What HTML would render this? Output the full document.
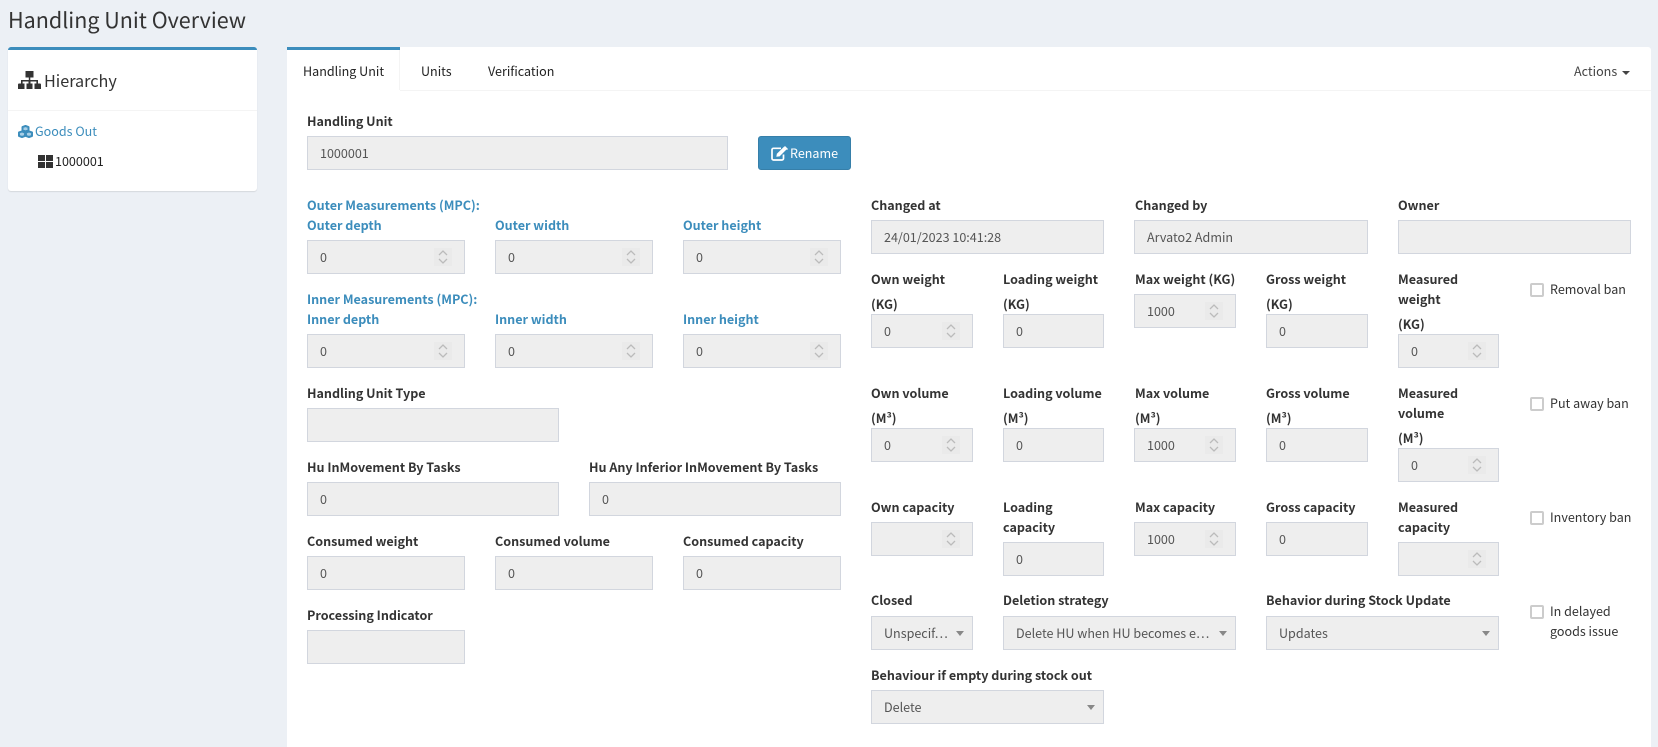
<!DOCTYPE html>
<html lang="en"><head><meta charset="utf-8"><title>Handling Unit Overview</title>
<style>
*{box-sizing:border-box}
html,body{margin:0;padding:0;width:1658px;height:747px;overflow:hidden;background:#ecf0f5}
body{position:relative;font-family:"Noto Sans CJK JP","Liberation Sans",sans-serif;font-size:12.55px;color:#333}
.a,.l,.i,.s,.b,.c{position:absolute}
.a{white-space:nowrap;line-height:20px}
.l{font-weight:700;line-height:20px;white-space:nowrap;color:#333}
.bl{color:#3c8dbc}
.i,.s{height:34px;background:#eee;border:1px solid #d2d6de;color:#555;line-height:32px;padding-left:12px;white-space:nowrap}
.s::after{content:"";position:absolute;right:8px;top:14px;border:4px solid transparent;border-top:5px solid #888;border-bottom:0}
.n::before{content:"";position:absolute;right:12px;top:7px;width:18px;height:18px;background:#eaeaea}
.n svg{position:absolute;right:16px;top:8px}
.c{width:14px;height:14px;border:2px solid #ccc;border-radius:2px;background:#fff}
.box{position:absolute;background:#fff;border-top:3px solid #3c8dbc;border-radius:3px}
</style></head><body>
<div class="a" style="left:8px;top:4px;font-size:21.5px;line-height:32px">Handling Unit Overview</div>

<div class="box" style="left:8px;top:47px;width:249px;height:144px;box-shadow:0 1px 1px rgba(0,0,0,.1)"></div>
<svg class="a" style="left:18px;top:71px" width="23" height="19" viewBox="0 0 23 19" fill="#333"><path d="M7.500 0h8v6.500h-8zM10.800 6h1.500v3H20v3.500h-1.600v-2h-5.900v2h-2v-2H4.600v2H3V9h7.800z"/><path d="M1 12.500h5.500V18H0v-4.500a1 1 0 0 1 1-1zM8.500 12.500h6V18h-6zM16.500 12.500H22a1 1 0 0 1 1 1V18h-6.500z"/></svg>
<div class="a" style="left:44px;top:67px;font-size:16.2px;line-height:26px">Hierarchy</div>
<div class="a" style="left:8px;top:110px;width:249px;height:1px;background:#f4f4f4"></div>
<svg class="a" style="left:18px;top:125px" width="15" height="13" viewBox="0 0 15 13" fill="#a9cfe6" stroke="#3c8dbc" stroke-width="2" stroke-linejoin="round"><path d="M7.500 1l3 1.100v3.200l-3 1.100-3-1.100V2.100zM4 6.400l3 1.100v3.400L4 12 1 10.900V7.500zM11 6.400l3 1.100v3.400L11 12l-3-1.100V7.500z"/></svg>
<div class="a" style="left:35px;top:121px;color:#3c8dbc">Goods Out</div>
<svg class="a" style="left:38px;top:155px" width="15" height="13" viewBox="0 0 15 13" fill="#333"><path d="M0 0h7v6H0zM8 0h7v6H8zM0 7h7v6H0zM8 7h7v6H8z"/></svg>
<div class="a" style="left:55px;top:151px;color:#222">1000001</div>

<div class="box" style="left:287px;top:47px;width:1364px;height:700px;border-top:0;border-radius:3px 3px 0 0"></div>
<div class="a" style="left:287px;top:47px;width:113px;height:3px;background:#3c8dbc"></div>
<div class="a" style="left:287px;top:90px;width:1364px;height:1px;background:#f4f4f4"></div>
<div class="a" style="left:399px;top:50px;width:1px;height:41px;background:#f4f4f4"></div>
<div class="a" style="left:287px;top:90px;width:113px;height:1px;background:#fff"></div>
<div class="a" style="left:303px;top:61px;color:#222">Handling Unit</div>
<div class="a" style="left:421px;top:61px;color:#222">Units</div>
<div class="a" style="left:488px;top:61px;color:#222">Verification</div>
<div class="a" style="left:1574px;top:61px;color:#444">Actions</div>
<div class="a" style="left:1622px;top:71px;width:0;height:0;border:4px solid transparent;border-top:4px solid #444;border-bottom:0"></div>

<div class="l" style="left:307px;top:111px">Handling Unit</div>
<div class="i" style="left:307px;top:136px;width:421px">1000001</div>
<div class="a" style="left:758px;top:136px;width:93px;height:34px;background:#3c8dbc;border:1px solid #367fa9;border-radius:3px;color:#fff;line-height:32px;padding-left:31px">Rename</div>
<svg class="a" style="left:771px;top:146px" width="17" height="15" viewBox="0 0 17 15" fill="none" stroke="#fff"><path d="M10 2.300H2.500A1.500 1.500 0 0 0 1 3.800v8.700A1.500 1.500 0 0 0 2.500 14h8.500a1.500 1.500 0 0 0 1.500-1.500V8.500" stroke-width="1.700"/><path d="M5.300 10.800l.6-3.100L13 .8l2.600 2.600-7 7z" fill="#fff" stroke="none"/><path d="M14 0l3 3-1 1-3-3z" fill="#fff" stroke="none"/></svg>

<div class="l bl" style="left:307px;top:195px">Outer Measurements (MPC):</div>
<div class="l bl" style="left:307px;top:215px">Outer depth</div>
<div class="l bl" style="left:495px;top:215px">Outer width</div>
<div class="l bl" style="left:683px;top:215px">Outer height</div>
<div class="i n" style="left:307px;top:240px;width:158px">0<svg width="10" height="16" viewBox="0 0 10 16" fill="none" stroke="#bbb" stroke-width="1.300"><path d="M1 6l4-4 4 4M1 10l4 4 4-4"/></svg></div>
<div class="i n" style="left:495px;top:240px;width:158px">0<svg width="10" height="16" viewBox="0 0 10 16" fill="none" stroke="#bbb" stroke-width="1.300"><path d="M1 6l4-4 4 4M1 10l4 4 4-4"/></svg></div>
<div class="i n" style="left:683px;top:240px;width:158px">0<svg width="10" height="16" viewBox="0 0 10 16" fill="none" stroke="#bbb" stroke-width="1.300"><path d="M1 6l4-4 4 4M1 10l4 4 4-4"/></svg></div>

<div class="l bl" style="left:307px;top:289px">Inner Measurements (MPC):</div>
<div class="l bl" style="left:307px;top:309px">Inner depth</div>
<div class="l bl" style="left:495px;top:309px">Inner width</div>
<div class="l bl" style="left:683px;top:309px">Inner height</div>
<div class="i n" style="left:307px;top:334px;width:158px">0<svg width="10" height="16" viewBox="0 0 10 16" fill="none" stroke="#bbb" stroke-width="1.300"><path d="M1 6l4-4 4 4M1 10l4 4 4-4"/></svg></div>
<div class="i n" style="left:495px;top:334px;width:158px">0<svg width="10" height="16" viewBox="0 0 10 16" fill="none" stroke="#bbb" stroke-width="1.300"><path d="M1 6l4-4 4 4M1 10l4 4 4-4"/></svg></div>
<div class="i n" style="left:683px;top:334px;width:158px">0<svg width="10" height="16" viewBox="0 0 10 16" fill="none" stroke="#bbb" stroke-width="1.300"><path d="M1 6l4-4 4 4M1 10l4 4 4-4"/></svg></div>

<div class="l" style="left:307px;top:383px">Handling Unit Type</div>
<div class="i" style="left:307px;top:408px;width:252px"></div>
<div class="l" style="left:307px;top:457px">Hu InMovement By Tasks</div>
<div class="l" style="left:589px;top:457px">Hu Any Inferior InMovement By Tasks</div>
<div class="i" style="left:307px;top:482px;width:252px">0</div>
<div class="i" style="left:589px;top:482px;width:252px">0</div>
<div class="l" style="left:307px;top:531px">Consumed weight</div>
<div class="l" style="left:495px;top:531px">Consumed volume</div>
<div class="l" style="left:683px;top:531px">Consumed capacity</div>
<div class="i" style="left:307px;top:556px;width:158px">0</div>
<div class="i" style="left:495px;top:556px;width:158px">0</div>
<div class="i" style="left:683px;top:556px;width:158px">0</div>
<div class="l" style="left:307px;top:605px">Processing Indicator</div>
<div class="i" style="left:307px;top:630px;width:158px"></div>

<div class="l" style="left:871px;top:195px">Changed at</div>
<div class="l" style="left:1135px;top:195px">Changed by</div>
<div class="l" style="left:1398px;top:195px">Owner</div>
<div class="i" style="left:871px;top:220px;width:233px">24/01/2023 10:41:28</div>
<div class="i" style="left:1134px;top:220px;width:234px">Arvato2 Admin</div>
<div class="i" style="left:1398px;top:220px;width:233px"></div>

<div class="l" style="left:871px;top:269px">Own weight</div>
<div class="l" style="left:871px;top:294px">(KG)</div>
<div class="l" style="left:1003px;top:269px">Loading weight</div>
<div class="l" style="left:1003px;top:294px">(KG)</div>
<div class="l" style="left:1135px;top:269px">Max weight (KG)</div>
<div class="l" style="left:1266px;top:269px">Gross weight</div>
<div class="l" style="left:1266px;top:294px">(KG)</div>
<div class="l" style="left:1398px;top:269px">Measured</div>
<div class="l" style="left:1398px;top:289px">weight</div>
<div class="l" style="left:1398px;top:314px">(KG)</div>
<div class="i n" style="left:871px;top:314px;width:102px">0<svg width="10" height="16" viewBox="0 0 10 16" fill="none" stroke="#bbb" stroke-width="1.300"><path d="M1 6l4-4 4 4M1 10l4 4 4-4"/></svg></div>
<div class="i" style="left:1003px;top:314px;width:101px">0</div>
<div class="i n" style="left:1134px;top:294px;width:102px">1000<svg width="10" height="16" viewBox="0 0 10 16" fill="none" stroke="#bbb" stroke-width="1.300"><path d="M1 6l4-4 4 4M1 10l4 4 4-4"/></svg></div>
<div class="i" style="left:1266px;top:314px;width:102px">0</div>
<div class="i n" style="left:1398px;top:334px;width:101px">0<svg width="10" height="16" viewBox="0 0 10 16" fill="none" stroke="#bbb" stroke-width="1.300"><path d="M1 6l4-4 4 4M1 10l4 4 4-4"/></svg></div>
<div class="c" style="left:1530px;top:283px"></div>
<div class="a" style="left:1550px;top:279px">Removal ban</div>

<div class="l" style="left:871px;top:383px">Own volume</div>
<div class="l" style="left:871px;top:408px">(M³)</div>
<div class="l" style="left:1003px;top:383px">Loading volume</div>
<div class="l" style="left:1003px;top:408px">(M³)</div>
<div class="l" style="left:1135px;top:383px">Max volume</div>
<div class="l" style="left:1135px;top:408px">(M³)</div>
<div class="l" style="left:1266px;top:383px">Gross volume</div>
<div class="l" style="left:1266px;top:408px">(M³)</div>
<div class="l" style="left:1398px;top:383px">Measured</div>
<div class="l" style="left:1398px;top:403px">volume</div>
<div class="l" style="left:1398px;top:428px">(M³)</div>
<div class="i n" style="left:871px;top:428px;width:102px">0<svg width="10" height="16" viewBox="0 0 10 16" fill="none" stroke="#bbb" stroke-width="1.300"><path d="M1 6l4-4 4 4M1 10l4 4 4-4"/></svg></div>
<div class="i" style="left:1003px;top:428px;width:101px">0</div>
<div class="i n" style="left:1134px;top:428px;width:102px">1000<svg width="10" height="16" viewBox="0 0 10 16" fill="none" stroke="#bbb" stroke-width="1.300"><path d="M1 6l4-4 4 4M1 10l4 4 4-4"/></svg></div>
<div class="i" style="left:1266px;top:428px;width:102px">0</div>
<div class="i n" style="left:1398px;top:448px;width:101px">0<svg width="10" height="16" viewBox="0 0 10 16" fill="none" stroke="#bbb" stroke-width="1.300"><path d="M1 6l4-4 4 4M1 10l4 4 4-4"/></svg></div>
<div class="c" style="left:1530px;top:397px"></div>
<div class="a" style="left:1550px;top:393px">Put away ban</div>

<div class="l" style="left:871px;top:497px">Own capacity</div>
<div class="l" style="left:1003px;top:497px">Loading</div>
<div class="l" style="left:1003px;top:517px">capacity</div>
<div class="l" style="left:1135px;top:497px">Max capacity</div>
<div class="l" style="left:1266px;top:497px">Gross capacity</div>
<div class="l" style="left:1398px;top:497px">Measured</div>
<div class="l" style="left:1398px;top:517px">capacity</div>
<div class="i n" style="left:871px;top:522px;width:102px"><svg width="10" height="16" viewBox="0 0 10 16" fill="none" stroke="#bbb" stroke-width="1.300"><path d="M1 6l4-4 4 4M1 10l4 4 4-4"/></svg></div>
<div class="i" style="left:1003px;top:542px;width:101px">0</div>
<div class="i n" style="left:1134px;top:522px;width:102px">1000<svg width="10" height="16" viewBox="0 0 10 16" fill="none" stroke="#bbb" stroke-width="1.300"><path d="M1 6l4-4 4 4M1 10l4 4 4-4"/></svg></div>
<div class="i" style="left:1266px;top:522px;width:102px">0</div>
<div class="i n" style="left:1398px;top:542px;width:101px"><svg width="10" height="16" viewBox="0 0 10 16" fill="none" stroke="#bbb" stroke-width="1.300"><path d="M1 6l4-4 4 4M1 10l4 4 4-4"/></svg></div>
<div class="c" style="left:1530px;top:511px"></div>
<div class="a" style="left:1550px;top:507px">Inventory ban</div>

<div class="l" style="left:871px;top:590px">Closed</div>
<div class="l" style="left:1003px;top:590px">Deletion strategy</div>
<div class="l" style="left:1266px;top:590px">Behavior during Stock Update</div>
<div class="s" style="left:871px;top:616px;width:102px">Unspecif…</div>
<div class="s" style="left:1003px;top:616px;width:233px">Delete HU when HU becomes e…</div>
<div class="s" style="left:1266px;top:616px;width:233px">Updates</div>
<div class="c" style="left:1530px;top:605px"></div>
<div class="a" style="left:1550px;top:601px">In delayed</div>
<div class="a" style="left:1550px;top:621px">goods issue</div>
<div class="l" style="left:871px;top:665px">Behaviour if empty during stock out</div>
<div class="s" style="left:871px;top:690px;width:233px">Delete</div>
</body></html>
